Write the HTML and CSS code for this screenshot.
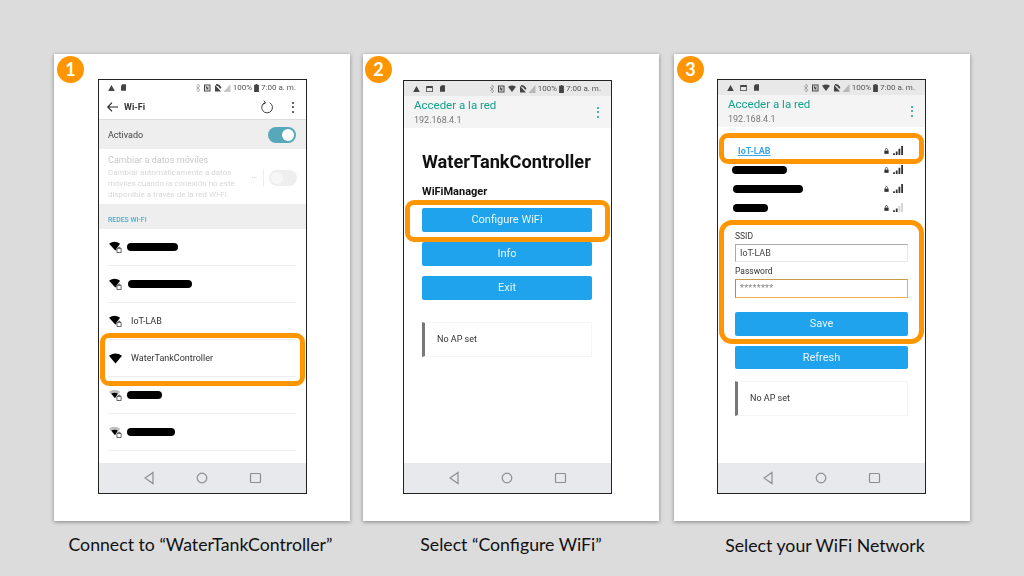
FILE: index.html
```html
<!DOCTYPE html>
<html lang="en">
<head>
  <meta charset="UTF-8">
  <meta name="viewport" content="width=device-width, initial-scale=1.0">
  <title>WaterTankController WiFi setup</title>
  <link rel="stylesheet" href="styles.css">
</head>
<body>
  <svg class="defs" width="0" height="0">
    <symbol id="wifi" viewBox="0 0 12 10"><path d="M0 3 Q6 -1.5 12 3 L6 10 Z"/></symbol>
    <symbol id="wifi-lock" viewBox="0 0 14 13">
      <path d="M0 3 Q6 -1.5 12 3 L8 8 V10 L6.500 10 Z"/>
      <path d="M8.600 8h4.500v4.500h-4.500z M9.800 8V6.800h2.100V8" fill="#fff" stroke="#444" stroke-width=".9"/>
    </symbol>
    <symbol id="wifi-weak" viewBox="0 0 14 13">
      <path d="M0 3 Q6 -1.500 12 3 L6 10 Z" fill="#bdbdbd"/>
      <path d="M2.500 5 Q6 3 9.500 5 L6.500 10 Z"/>
      <path d="M8.600 8h4.500v4.500h-4.500z M9.800 8V6.800h2.100V8" fill="#fff" stroke="#444" stroke-width=".9"/>
    </symbol>
    <symbol id="warn" viewBox="0 0 10 9"><path d="M5 0 L10 9 H0 Z"/></symbol>
    <symbol id="sim" viewBox="0 0 7 9"><path d="M2 0 H7 V9 H0 V2 Z"/></symbol>
    <symbol id="pic" viewBox="0 0 10 9"><path d="M0 0H10V9H0Z M1.200 3V7.800H8.800V3Z" fill-rule="evenodd"/></symbol>
    <symbol id="bt-nfc" viewBox="0 0 15 8">
      <path d="M2 0 V8 M0 2 L4 6 L2 8 M0 6 L4 2 L2 0" fill="none" stroke="currentColor" stroke-width=".6" opacity=".55"/>
      <path d="M8 0.500H14.500V7.500H8Z M9 1.500V6.500H13.500V1.500Z" fill-rule="evenodd"/>
      <path d="M9.800 2.200h1l1 2V2.200h.6v3.600h-1l-1-2v2h-.6z"/>
    </symbol>
    <symbol id="mute-signal" viewBox="0 0 17 8">
      <path d="M1 1 L7 7.500 H1 Z M2 0 Q6 0 7.500 4 L6 4.800 Q5 2 2 1.500Z"/>
      <path d="M9.500 8 L16.500 0 V8 Z" opacity=".3"/>
    </symbol>
    <symbol id="status-wifi" viewBox="0 0 9 8"><path d="M0 2 Q4.500 -1 9 2 L4.500 8 Z"/></symbol>
    <symbol id="batt" viewBox="0 0 6 10"><path d="M2 0H4V1H6V10H0V1H2Z"/></symbol>
    <symbol id="lock" viewBox="0 0 7 8"><path d="M0.500 3.500H6.500V8H0.500Z"/><path d="M2 3.500V2A1.500 1.500 0 0 1 5 2V3.500" fill="none" stroke="currentColor"/></symbol>
    <symbol id="bars" viewBox="0 0 12 10"><path d="M0 8h2v2H0z M3 6h2v4H3z M6 3h2v7H6z M9 0h2v10H9z"/></symbol>
    <symbol id="bars-low" viewBox="0 0 12 10"><path d="M0 8h2v2H0z M3 6h2v4H3z"/><path d="M6 3h2v7H6z M9 0h2v10H9z" opacity=".22"/></symbol>
    <symbol id="nav" viewBox="0 0 122 14">
      <path d="M9 1.500 L1 7 L9 12.500 Z M58 7 m-4.800 0 a4.800 4.800 0 1 0 9.600 0 a4.800 4.800 0 1 0 -9.600 0 M107.500 2.500 h8 a1 1 0 0 1 1 1 v7 a1 1 0 0 1 -1 1 h-8 a1 1 0 0 1 -1 -1 v-7 a1 1 0 0 1 1 -1 Z" fill="none" stroke="#8b8d90" stroke-width="1.200"/>
    </symbol>
  </svg>

  <main class="slides">
    <section class="step">
      <div class="card card-one">
        <span class="badge">1</span>
        <div class="phone phone-wifi">
          <div class="status status-white">
            <svg class="ic-warn"><use href="#warn"/></svg>
            <svg class="ic-sim"><use href="#sim"/></svg>
            <span class="status-fill"></span>
            <svg class="ic-btnfc"><use href="#bt-nfc"/></svg>
            <svg class="ic-mute"><use href="#mute-signal"/></svg>
            <span>100%</span>
            <svg class="ic-batt"><use href="#batt"/></svg>
            <span>7:00 a. m.</span>
          </div>
          <div class="toolbar">
            <svg class="ic-back" viewBox="0 0 11 10"><path d="M5 .7 L.8 5 L5 9.300 M.8 5 H11" fill="none" stroke="#222" stroke-width="1.100"/></svg>
            <span class="toolbar-title">Wi-Fi</span>
            <svg class="ic-refresh" viewBox="0 0 14 15"><path d="M4 2.800 A5.800 5.800 0 1 0 9.500 3 M3 .5 L5 3.200 L2.200 4.500" fill="none" stroke="#333" stroke-width="1"/></svg>
            <span class="dots"><i></i><i></i><i></i></span>
          </div>
          <div class="active-row">
            <span>Activado</span>
            <span class="toggle toggle-on"></span>
          </div>
          <div class="mobile-row">
            <div class="mobile-text">
              <div class="mobile-title">Cambiar a datos móviles</div>
              <p>Cambiar automáticamente a datos móviles cuando la conexión no esté disponible a través de la red Wi-Fi</p>
            </div>
            <span class="more">•••</span>
            <span class="toggle toggle-off"></span>
          </div>
          <div class="section-label">REDES WI-FI</div>
          <ul class="networks">
            <li><svg class="ic-net"><use href="#wifi-lock"/></svg><span class="blot blot-a"></span></li>
            <li><svg class="ic-net"><use href="#wifi-lock"/></svg><span class="blot blot-b"></span></li>
            <li><svg class="ic-net"><use href="#wifi-lock"/></svg><span class="net-name">IoT-LAB</span></li>
            <li><svg class="ic-net"><use href="#wifi"/></svg><span class="net-name">WaterTankController</span></li>
            <li><svg class="ic-net"><use href="#wifi-weak"/></svg><span class="blot blot-c"></span></li>
            <li><svg class="ic-net"><use href="#wifi-weak"/></svg><span class="blot blot-d"></span></li>
          </ul>
          <div class="navbar"><svg class="ic-nav"><use href="#nav"/></svg></div>
        </div>
        <span class="mark mark-water"></span>
      </div>
      <p class="caption caption-one">Connect to “WaterTankController”</p>
    </section>

    <section class="step">
      <div class="card card-two">
        <span class="badge">2</span>
        <div class="phone">
          <div class="status">
            <svg class="ic-warn"><use href="#warn"/></svg>
            <svg class="ic-pic"><use href="#pic"/></svg>
            <svg class="ic-sim"><use href="#sim"/></svg>
            <span class="status-fill"></span>
            <svg class="ic-btnfc"><use href="#bt-nfc"/></svg>
            <svg class="ic-swifi"><use href="#status-wifi"/></svg>
            <svg class="ic-mute"><use href="#mute-signal"/></svg>
            <span>100%</span>
            <svg class="ic-batt"><use href="#batt"/></svg>
            <span>7:00 a. m.</span>
          </div>
          <header class="portal-head">
            <div>
              <div class="portal-title">Acceder a la red</div>
              <div class="portal-ip">192.168.4.1</div>
            </div>
            <span class="dots dots-green"><i></i><i></i><i></i></span>
          </header>
          <div class="portal-body">
            <h1>WaterTankController</h1>
            <h2>WiFiManager</h2>
            <a class="btn">Configure WiFi</a>
            <a class="btn">Info</a>
            <a class="btn">Exit</a>
            <div class="notice">No AP set</div>
          </div>
          <div class="navbar"><svg class="ic-nav"><use href="#nav"/></svg></div>
        </div>
        <span class="mark mark-config"></span>
      </div>
      <p class="caption">Select “Configure WiFi”</p>
    </section>

    <section class="step step-last">
      <div class="card card-three">
        <span class="badge">3</span>
        <div class="phone">
          <div class="status">
            <svg class="ic-warn"><use href="#warn"/></svg>
            <svg class="ic-pic"><use href="#pic"/></svg>
            <svg class="ic-sim"><use href="#sim"/></svg>
            <span class="status-fill"></span>
            <svg class="ic-btnfc"><use href="#bt-nfc"/></svg>
            <svg class="ic-swifi"><use href="#status-wifi"/></svg>
            <svg class="ic-mute"><use href="#mute-signal"/></svg>
            <span>100%</span>
            <svg class="ic-batt"><use href="#batt"/></svg>
            <span>7:00 a. m.</span>
          </div>
          <header class="portal-head">
            <div>
              <div class="portal-title">Acceder a la red</div>
              <div class="portal-ip">192.168.4.1</div>
            </div>
            <span class="dots dots-green"><i></i><i></i><i></i></span>
          </header>
          <div class="portal-body portal-form">
            <ul class="ap-list">
              <li><a class="ap-link">IoT-LAB</a><svg class="ic-lock"><use href="#lock"/></svg><svg class="ic-bars"><use href="#bars"/></svg></li>
              <li><span class="blot blot-e"></span><svg class="ic-lock"><use href="#lock"/></svg><svg class="ic-bars"><use href="#bars"/></svg></li>
              <li><span class="blot blot-f"></span><svg class="ic-lock"><use href="#lock"/></svg><svg class="ic-bars"><use href="#bars"/></svg></li>
              <li><span class="blot blot-g"></span><svg class="ic-lock"><use href="#lock"/></svg><svg class="ic-bars"><use href="#bars-low"/></svg></li>
            </ul>
            <label>SSID</label>
            <div class="field">IoT-LAB</div>
            <label>Password</label>
            <div class="field field-focus">********</div>
            <a class="btn btn-save">Save</a>
            <a class="btn">Refresh</a>
            <div class="notice">No AP set</div>
          </div>
          <div class="navbar"><svg class="ic-nav"><use href="#nav"/></svg></div>
        </div>
        <span class="mark mark-ap"></span>
        <span class="mark mark-form"></span>
      </div>
      <p class="caption caption-three">Select your WiFi Network</p>
    </section>
  </main>
</body>
</html>
```

FILE: styles.css
```css
body {
  margin: 0;
  width: 1024px;
  height: 576px;
  overflow: hidden;
  background: #dcdcdc;
  font-family: Roboto, sans-serif;
}

.defs {
  position: absolute;
}

.slides {
  display: flex;
  gap: 13px;
  padding: 54px 0 0 54px;
}

.step {
  width: 296px;
}

.step-last {
  margin-left: 2px;
}

.card {
  position: relative;
  box-sizing: border-box;
  height: 467px;
  background: #fff;
  box-shadow: 0 1px 4px rgba(0, 0, 0, 0.4);
}

.card-one {
  padding: 25px 0 0 44px;
}

.card-two {
  padding: 26px 0 0 40px;
}

.card-three {
  padding: 25px 0 0 43px;
}

.badge {
  position: absolute;
  top: 2px;
  left: 3px;
  width: 27px;
  height: 27px;
  border-radius: 50%;
  background: #ff9500;
  color: #fff;
  font: bold 18px/27px Lato, sans-serif;
  text-align: center;
}

.card-two .badge {
  left: 2px;
}

.caption {
  margin: 14px 0 0;
  font: 17.700px/20px Lato, sans-serif;
  color: #111;
  text-align: center;
}

.caption-one {
  padding-right: 3px;
}

.caption-three {
  margin-top: 15px;
  padding-left: 6px;
}

/* phone frame */
.phone {
  display: flex;
  flex-direction: column;
  box-sizing: border-box;
  width: 209px;
  height: 415px;
  border: 1px solid #222;
  background: #fff;
  filter: blur(0.35px);
}

.card-two .phone {
  height: 414px;
}

.status {
  display: flex;
  align-items: center;
  flex: none;
  gap: 2px;
  height: 15px;
  padding: 0 10px 0 9px;
  background: #e8e8e8;
  color: #555;
  font-size: 8px;
}

.status-white {
  background: #fff;
}

.status svg {
  fill: #444;
  color: #444;
}

.status-fill {
  flex: 1;
}

.ic-warn {
  width: 7px;
  height: 6px;
  margin-right: 4px;
}

.ic-pic {
  width: 7px;
  height: 6px;
  margin-right: 5px;
}

.ic-sim {
  width: 5px;
  height: 7px;
}

.ic-btnfc {
  width: 15px;
  height: 8px;
}

.ic-swifi {
  width: 8px;
  height: 7px;
  margin-left: 1px;
}

.ic-mute {
  width: 17px;
  height: 8px;
  margin-left: 1px;
}

.ic-batt {
  width: 5px;
  height: 8px;
}

/* wifi settings screen */
.toolbar {
  display: flex;
  align-items: center;
  flex: none;
  height: 24px;
  padding: 0 12px 0 8px;
  border-bottom: 1px solid #ddd;
}

.ic-back {
  width: 11px;
  height: 10px;
  margin-right: 6px;
}

.toolbar-title {
  flex: 1;
  font-size: 9px;
  font-weight: 700;
  color: #333;
}

.ic-refresh {
  width: 13px;
  height: 14px;
  margin-right: 18px;
}

.dots {
  display: flex;
  flex-direction: column;
  gap: 2.500px;
}

.dots i {
  width: 2px;
  height: 2px;
  border-radius: 50%;
  background: #333;
}

.dots-green i {
  background: #12a08c;
}

.active-row {
  display: flex;
  align-items: center;
  justify-content: space-between;
  flex: none;
  height: 29px;
  padding: 0 10px 0 9px;
  background: #eeeeee;
  font-size: 9px;
  color: #444;
}

.toggle {
  position: relative;
  flex: none;
  width: 28px;
  height: 16px;
  border-radius: 8px;
}

.toggle::after {
  content: "";
  position: absolute;
  top: 2px;
  width: 12px;
  height: 12px;
  border-radius: 50%;
  background: #fff;
}

.toggle-on {
  background: #57a8bb;
}

.toggle-on::after {
  right: 2px;
}

.toggle-off {
  background: #eeeeee;
}

.toggle-off::after {
  left: 2px;
  background: #f7f7f7;
}

.mobile-row {
  display: flex;
  align-items: center;
  flex: none;
  box-sizing: border-box;
  height: 55px;
  padding: 2px 9px 0;
}

.mobile-text {
  width: 140px;
  margin-right: 4px;
}

.mobile-title {
  font-size: 9.100px;
  color: #c9c9c9;
}

.mobile-text p {
  margin: 2px 0 0;
  font-size: 8px;
  line-height: 11px;
  color: #d8d8d8;
}

.more {
  flex: none;
  box-sizing: content-box;
  width: 11px;
  height: 18px;
  margin-right: 5px;
  border-right: 1px solid #eeeeee;
  font-size: 3px;
  line-height: 18px;
  letter-spacing: 0.800px;
  color: #888;
}

.section-label {
  flex: none;
  box-sizing: border-box;
  height: 25px;
  padding: 12px 0 0 9px;
  background: #eeeeee;
  font-size: 6.900px;
  font-weight: 500;
  color: #45b0cc;
}

.networks {
  flex: 1;
  margin: 0;
  padding: 0 10px 0 9px;
  list-style: none;
}

.networks li {
  display: flex;
  align-items: center;
  box-sizing: border-box;
  height: 37px;
  border-bottom: 1px solid #eeeeee;
  color: #000;
}

.ic-net {
  flex: none;
  width: 13px;
  height: 12px;
  margin-left: 1px;
  fill: #000;
  color: #000;
}

.net-name {
  margin-left: 9px;
  font-size: 9px;
  color: #333;
}

.blot {
  display: block;
  height: 8px;
  border-radius: 4px;
  background: #000;
}

.blot-a { width: 51px; margin-left: 5px; }
.blot-b { width: 64px; margin-left: 6px; }
.blot-c { width: 35px; margin-left: 5px; }
.blot-d { width: 48px; margin-left: 5px; }
.blot-e { width: 55px; margin-left: -3px; }
.blot-f { width: 70px; margin-left: -2px; }
.blot-g { width: 35px; margin-left: -2px; }

.navbar {
  display: flex;
  align-items: center;
  justify-content: center;
  flex: none;
  height: 30px;
  background: #e8e9ec;
}

.ic-nav {
  width: 122px;
  height: 14px;
  margin-left: 5px;
}

/* captive portal screens */
.portal-head {
  display: flex;
  align-items: center;
  justify-content: space-between;
  flex: none;
  box-sizing: border-box;
  height: 32px;
  padding: 0 12px 0 10px;
  background: #f4f4f4;
}

.portal-title {
  font-size: 11.500px;
  line-height: 15px;
  color: #12a08c;
}

.portal-ip {
  padding-top: 1px;
  font-size: 9px;
  line-height: 12px;
  color: #777;
}

.portal-body {
  flex: 1;
  display: flex;
  flex-direction: column;
  padding: 23px 19px 0 18px;
}

h1 {
  margin: 0;
  font-size: 18.200px;
  line-height: 22px;
  font-weight: 700;
  color: #111;
}

h2 {
  margin: 12px 0 10px;
  font-size: 11px;
  line-height: 13px;
  font-weight: 700;
  color: #111;
}

.btn {
  display: block;
  flex: none;
  height: 23.500px;
  margin-bottom: 10.500px;
  border-radius: 2px;
  background: #1fa3ec;
  color: #e8f5fd;
  font-size: 11px;
  line-height: 23.500px;
  text-align: center;
}

.notice {
  flex: none;
  box-sizing: border-box;
  height: 35px;
  margin-top: 12px;
  padding-left: 12px;
  border: 1px solid #f5f5f5;
  border-left: 3px solid #777;
  font-size: 9px;
  line-height: 33px;
  color: #333;
}

.portal-form {
  padding: 14px 17px 0;
}

.portal-form .notice {
  margin-top: 1px;
}

.ap-list {
  flex: none;
  margin: 0 0 13px;
  padding: 0;
  list-style: none;
}

.ap-list li {
  display: flex;
  align-items: center;
  height: 19px;
}

.ap-link {
  margin-left: 3px;
  font-size: 9px;
  font-weight: 700;
  color: #3aa5e8;
  text-decoration: underline;
}

.ic-lock {
  width: 5px;
  height: 6px;
  margin-left: auto;
  margin-right: 4px;
  fill: #333;
  color: #333;
}

.ic-bars {
  width: 11px;
  height: 9px;
  margin-right: 4px;
  fill: #333;
}

label {
  display: block;
  font-size: 8.500px;
  line-height: 12px;
  color: #333;
}

.field {
  flex: none;
  box-sizing: border-box;
  height: 18px;
  margin: 2px 0 3px;
  padding-left: 4px;
  border: 1px solid #e8e8e8;
  border-top-color: #aaa;
  border-left-color: #aaa;
  font-size: 9px;
  line-height: 16px;
  color: #444;
}

.field-focus {
  height: 19px;
  margin-bottom: 14px;
  border-color: #eeb04e;
  border-top-color: #c89a48;
  border-left-color: #b08a48;
  color: #888;
  letter-spacing: 0.300px;
}

.btn-save {
  margin-bottom: 10px;
}

/* orange callouts over the screenshots */
.mark {
  position: absolute;
  box-sizing: border-box;
  width: 205px;
  border: 5px solid #ff9500;
  border-radius: 9px;
}

.mark-water {
  top: 279px;
  left: 46px;
  height: 53px;
}

.mark-config {
  top: 146px;
  left: 42px;
  height: 42px;
}

.mark-ap {
  top: 79px;
  left: 45px;
  height: 31px;
}

.mark-form {
  top: 166px;
  left: 45px;
  height: 124px;
  border-radius: 13px;
}
```
